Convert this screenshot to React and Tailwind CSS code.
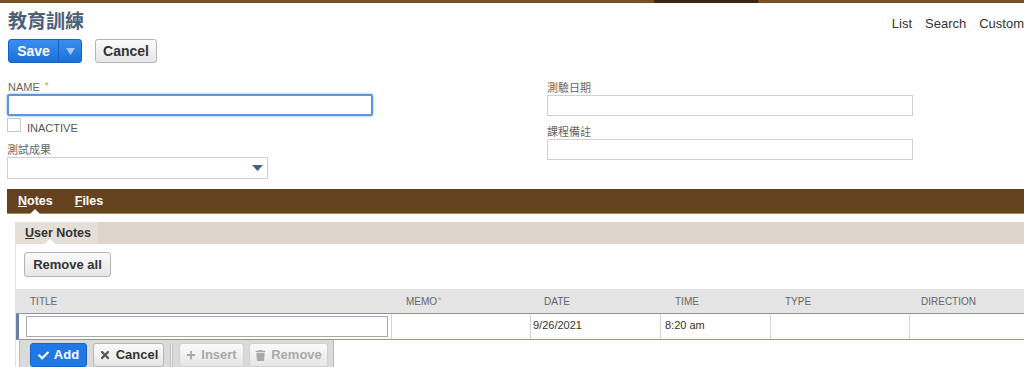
import { FaCheck, FaTimes, FaPlus, FaTrash } from 'react-icons/fa';

function Label({ children, star }) {
   return (
      <div className="h-[14px] text-[11px] leading-[14px] text-[#666]">
         {children}
         {star && <span className="ml-[5px] align-top text-[10px] text-[#e39b2f]">*</span>}
      </div>
   );
}

function GrayButton({ children, className = '', disabled = false }) {
   return (
      <div
         className={`flex items-center justify-center gap-[5px] rounded-[3px] border border-[#b4b4b4] bg-gradient-to-b from-[#fbfbfb] to-[#e6e6e6] text-[13px] font-bold ${
            disabled ? 'text-[#a9a9a9] border-[#cfcfcf]' : 'text-[#333]'
         } ${className}`}
      >
         {children}
      </div>
   );
}

export default function App() {
   return (
      <div className="h-[367px] w-[1024px] overflow-hidden bg-white font-['Liberation_Sans','Noto_Sans_CJK_TC',sans-serif] text-[#333]">
         {/* top strip */}
         <div className="flex h-[3px]">
            <div className="w-[654px] bg-[#7a5020]" />
            <div className="w-[104px] bg-[#3b2410]" />
            <div className="flex-1 bg-[#7a5020]" />
         </div>

         {/* header */}
         <div className="mt-[7px] flex h-[24px] items-center justify-between pl-[8px]">
            <h1 className="text-[19px] font-bold leading-[24px] text-[#4d5f79]">教育訓練</h1>
            <div className="mt-[3px] flex gap-[13px] whitespace-nowrap text-[13px] text-[#333]">
               <span>List</span>
               <span>Search</span>
               <span>Custom</span>
            </div>
         </div>

         {/* buttons */}
         <div className="mt-[5px] flex h-[24px] items-center pl-[8px]">
            <div className="flex h-[24px] w-[74px] overflow-hidden rounded-[3px] border border-[#1563c4] bg-gradient-to-b from-[#3b8ef0] to-[#1c6fdc]">
               <div className="flex w-[49px] items-center justify-center text-[14px] font-bold text-white">Save</div>
               <div className="flex flex-1 items-center justify-center border-l border-[#155fbe]">
                  <svg width="9" height="7" viewBox="0 0 9 7">
                     <path d="M0 0 L9 0 L4.5 7 Z" fill="#a9c9f2" />
                  </svg>
               </div>
            </div>
            <GrayButton className="ml-[13px] h-[24px] w-[62px] text-[14px]">Cancel</GrayButton>
         </div>

         {/* form */}
         <div className="ml-[7px] mt-[17px] grid grid-cols-[366px_366px] gap-x-[174px]">
            <div className="flex flex-col">
               <div className="pl-[1px]">
                  <Label star>NAME</Label>
               </div>
               <div className="h-[22px] w-[366px] rounded-[2px] border-2 border-[#5b95dc] shadow-[0_0_3px_#8ab4ea]" />
               <div className="mt-[2px] flex h-[25px] items-start">
                  <div className="h-[14px] w-[14px] border border-[#c8c8c8] bg-white" />
                  <span className="ml-[6px] mt-[3px] text-[11px] leading-[14px] text-[#555]">INACTIVE</span>
               </div>
               <Label>測試成果</Label>
               <div className="flex h-[22px] w-[261px] items-center justify-end border border-[#cfcfcf] pr-[4px]">
                  <svg width="11" height="6" viewBox="0 0 11 6">
                     <path d="M0 0 L11 0 L5.5 6 Z" fill="#4a5e7e" />
                  </svg>
               </div>
            </div>
            <div className="flex flex-col pt-[1px]">
               <Label>測驗日期</Label>
               <div className="h-[21px] w-[366px] border border-[#cfcfcf]" />
               <div className="mt-[9px]">
                  <Label>課程備註</Label>
               </div>
               <div className="h-[21px] w-[366px] border border-[#cfcfcf]" />
            </div>
         </div>

         {/* tabs */}
         <div className="relative ml-[7px] mt-[10px] flex h-[25px] items-center border-b border-[#a9885c] bg-[#664320] pl-[11px] text-[12.5px] font-bold text-white">
            <span>
               <span className="underline">N</span>otes
            </span>
            <span className="ml-[22px]">
               <span className="underline">F</span>iles
            </span>
            <div className="absolute bottom-[-1px] left-[23px] h-0 w-0 border-x-[5px] border-b-[5px] border-x-transparent border-b-white" />
         </div>

         {/* sub tab */}
         <div className="ml-[15px] mt-[8px] flex h-[22px] bg-[#ded5cc]">
            <div className="relative flex w-[83px] items-center bg-[#e5dfd8] pl-[10px] text-[12.5px] font-bold text-[#333]">
               <span>
                  <span className="underline">U</span>ser Notes
               </span>
               <div className="absolute bottom-0 left-[30px] h-0 w-0 border-x-[5px] border-b-[5px] border-x-transparent border-b-white" />
            </div>
         </div>

         {/* panel */}
         <div className="ml-[15px] border-l border-[#e2e2e2] pt-[8px]">
            <GrayButton className="ml-[8px] h-[25px] w-[87px]">Remove all</GrayButton>

            <div className="mt-[12px] grid h-[24px] grid-cols-[376px_139px_130px_110px_139px_1fr] items-center bg-[#e5e5e5] text-[10px] uppercase text-[#666]">
               <div className="pl-[14px]">Title</div>
               <div className="pl-[14px]">
                  Memo<span className="ml-[1px] align-top text-[9px] text-[#e39b2f]">*</span>
               </div>
               <div className="pl-[13px]">Date</div>
               <div className="pl-[14px]">Time</div>
               <div className="pl-[14px]">Type</div>
               <div className="pl-[11px]">Direction</div>
            </div>

            <div className="grid h-[27px] grid-cols-[376px_139px_130px_110px_139px_1fr] border-b border-t border-[#8497bb] text-[11px] text-[#333]">
               <div className="flex items-center border-l-[3px] border-r border-l-[#6a7ea6] border-r-[#d6d6d6] pl-[7px]">
                  <div className="h-[21px] w-[362px] border border-[#a9a9a9] bg-white" />
               </div>
               <div className="border-r border-[#d6d6d6]" />
               <div className="border-r border-[#d6d6d6] pl-[2px] pt-[3px]">9/26/2021</div>
               <div className="border-r border-[#d6d6d6] pl-[4px] pt-[3px]">8:20 am</div>
               <div className="border-r border-[#d6d6d6]" />
               <div />
            </div>

            <div className="ml-[3px] flex h-[30px] w-[315px] items-start gap-[6px] border-x border-[#b9b9b9] bg-[#dadada] pl-[10px] pt-[3px]">
               <div className="flex h-[24px] w-[57px] items-center justify-center gap-[5px] rounded-[3px] border border-[#1563c4] bg-[#1f78e6] text-[13px] font-bold text-white">
                  <FaCheck size={11} />
                  Add
               </div>
               <GrayButton className="h-[24px] w-[71px]">
                  <FaTimes size={12} className="text-[#555]" />
                  Cancel
               </GrayButton>
               <div className="h-[24px] w-[3px] border-x border-[#c4c4c4] bg-[#eeeeee]" />
               <GrayButton disabled className="h-[24px] w-[65px]">
                  <FaPlus size={10} />
                  Insert
               </GrayButton>
               <GrayButton disabled className="-ml-[1px] h-[24px] w-[79px]">
                  <FaTrash size={11} />
                  Remove
               </GrayButton>
            </div>
         </div>
      </div>
   );
}
